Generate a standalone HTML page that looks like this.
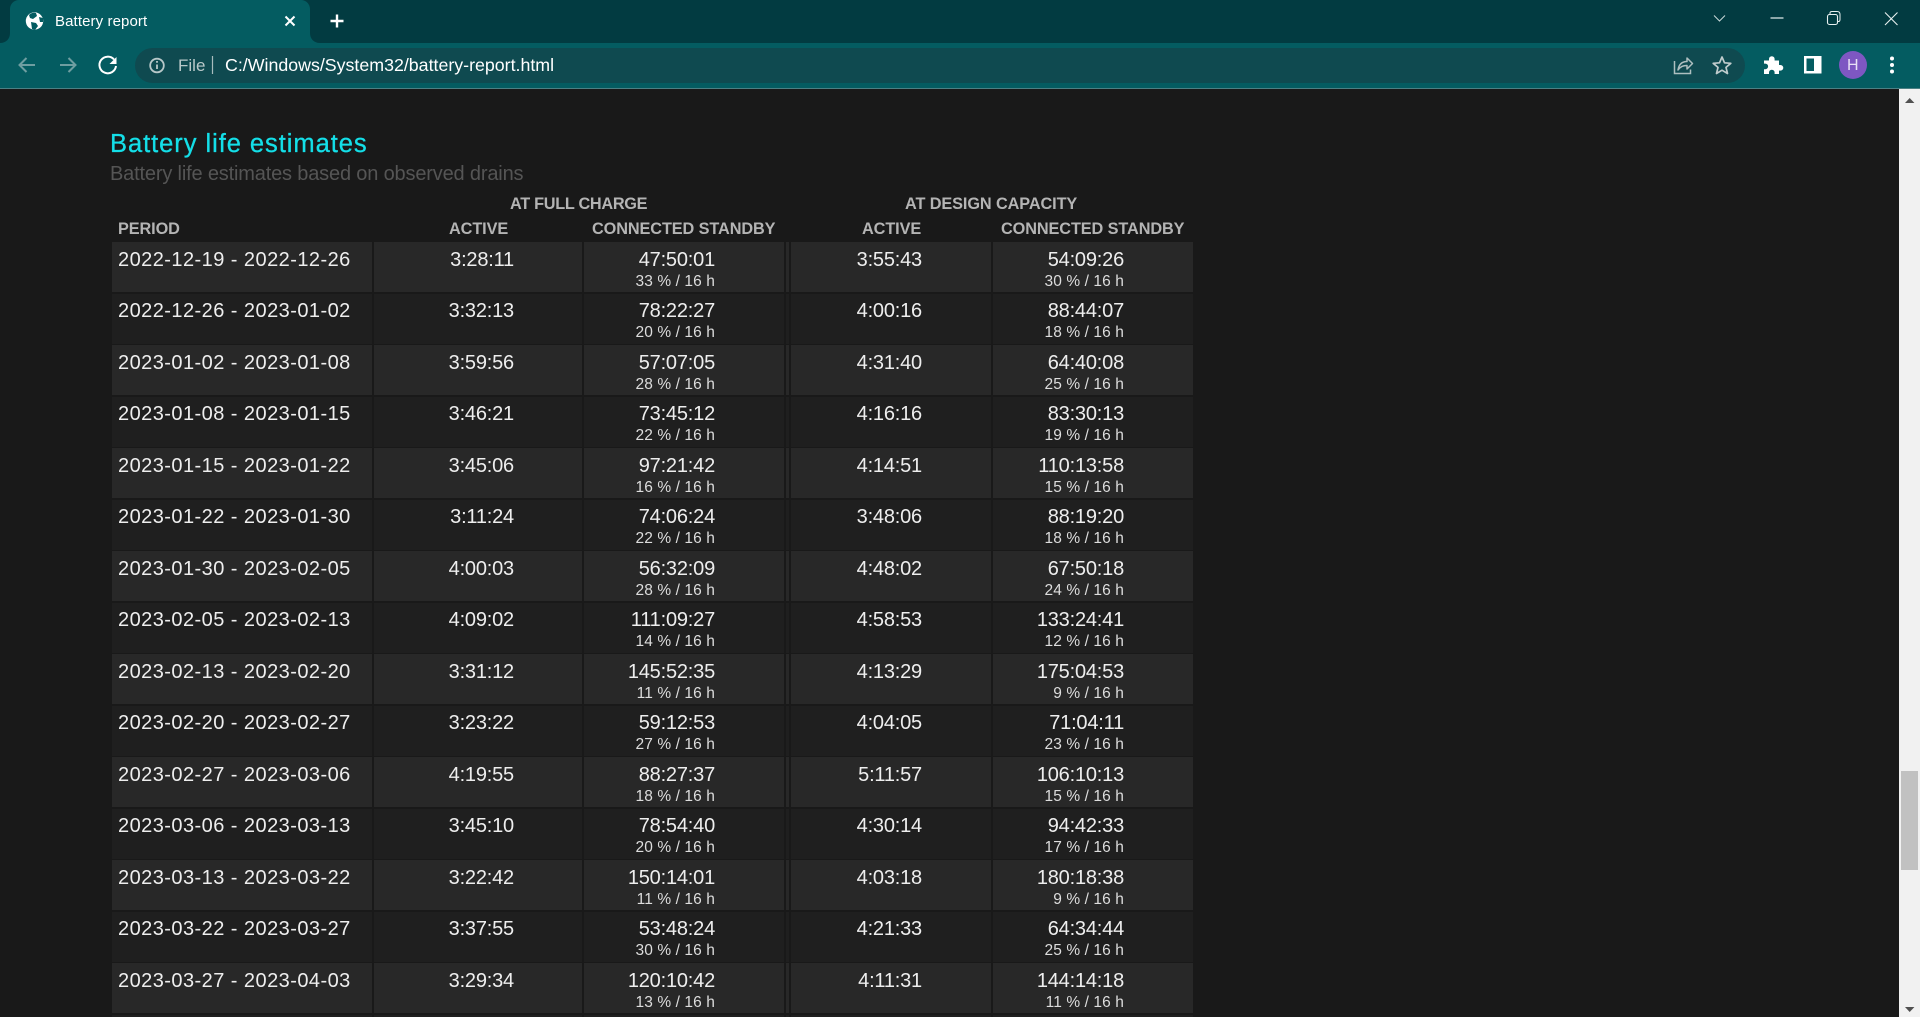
<!DOCTYPE html>
<html><head><meta charset="utf-8"><title>Battery report</title>
<style>
html,body{margin:0;padding:0;width:1920px;height:1017px;overflow:hidden;background:#191919;font-family:"Liberation Sans",sans-serif;}
#top{position:absolute;left:0;top:0;width:1920px;height:43px;background:#023b41;}
#bar{position:absolute;left:0;top:43px;width:1920px;height:45px;background:#045c61;}
#line{position:absolute;left:0;top:88px;width:1920px;height:1px;background:#4b8084;}
#omni{position:absolute;left:135px;top:48px;width:1610px;height:35px;border-radius:18px;background:#0f4a50;}
.t{position:absolute;white-space:nowrap;}
svg{position:absolute;left:0;top:0;}
.row{position:absolute;left:0;width:1200px;height:50px;}
.c{position:absolute;top:0;height:50px;}
.l .c{background:#282828;}
.d .c{background:#1f1f1f;}
.c1{left:112px;width:260px;}.c2{left:374px;width:208px;}.c3{left:584px;width:200px;}.c4{left:786px;width:3px;}.c5{left:791px;width:200px;}.c6{left:993px;width:200px;}
.txt{position:absolute;color:#eee;white-space:nowrap;font-size:20px;line-height:24px;top:6px;letter-spacing:-.2px;}
.d .txt{top:5.500px;}
.txt.p{left:118px;letter-spacing:.45px;}
.r2{right:686px;}.r3{right:485px;}.r5{right:278px;}.r6{right:76px;}
.s{position:absolute;color:#ddd;white-space:nowrap;font-size:15.5px;line-height:18px;top:31px;letter-spacing:.1px;}
.d .s{top:30px;}
.rows{position:absolute;left:0;top:0;width:1200px;height:1017px;overflow:hidden;}
.h{position:absolute;color:#b4b4b4;font-weight:bold;font-size:16.3px;line-height:20px;white-space:nowrap;letter-spacing:-.1px;}
#sb{position:absolute;left:1899px;top:89px;width:21px;height:928px;background:#f1f1f1;}
#th{position:absolute;left:1901px;top:771px;width:17px;height:99px;background:#c1c1c1;}
</style></head><body>
<div id="top"></div><div id="bar"></div><div id="line"></div><div id="omni"></div>
<svg width="1920" height="89" viewBox="0 0 1920 89" fill="none">
<path d="M0 43C6 43 10 39 10 33V9C10 4 14 0 19 0H301C306 0 310 4 310 9V33C310 39 314 43 320 43Z" fill="#045c61"/>
<circle cx="34.5" cy="21" r="8.7" fill="#fff"/>
<path d="M29 15c2-2 5-3 7-2l1 3-4 3-3-1zM31 22l5 1 2 3-3 4-3-1zM39 17l4 1 0 4-3 0z" fill="#045c61"/>
<path d="M285.5 16.5l9 9M294.500 16.500l-9 9" stroke="#fff" stroke-width="2"/>
<path d="M337 14.500v13M330.500 21h13" stroke="#fff" stroke-width="2.400"/>
<path d="M1714 15.500l5.500 5.500 5.500-5.500" stroke="#c9d8d9" stroke-width="1"/>
<path d="M1770.500 18h13" stroke="#e8f0f0" stroke-width="1.200"/>
<rect x="1827.500" y="14.500" width="10" height="10" rx="2" stroke="#e8f0f0" stroke-width="1.100"/>
<path d="M1830 14v-1c0-1 1-1.500 2-1.500h5c2 0 3 1 3 3v5c0 1-.5 2-1.500 2h-1" stroke="#e8f0f0" stroke-width="1"/>
<path d="M1885 12.500l12.500 12.500M1897.500 12.500l-12.500 12.500" stroke="#e8f0f0" stroke-width="1.100"/>
<path d="M35 65H20M26.500 58l-7 7 7 7" stroke="#6f9ea1" stroke-width="2"/>
<path d="M60 65h15M68.500 58l7 7-7 7" stroke="#6f9ea1" stroke-width="2"/>
<path d="M114 59.500a8.300 8.300 0 1 0 2 6.500" stroke="#fff" stroke-width="2"/>
<path d="M116.500 57v7h-7z" fill="#fff"/>
<circle cx="157" cy="65.500" r="6.800" stroke="#b8c8c9" stroke-width="1.800"/>
<path d="M157 64.500v4.500M157 61v1.800" stroke="#b8c8c9" stroke-width="1.800"/>
<path d="M212.500 56v18" stroke="#a8bcbe" stroke-width="1.200"/>
<path d="M1674.500 61v12.500h16v-4" stroke="#aebfc0" stroke-width="1.500"/>
<path d="M1678 70c1-6 4-8.500 9-8.500v-3.500l5.500 5.500-5.500 5.500v-3.500c-4 0-6.500 1-9 4.500z" stroke="#aebfc0" stroke-width="1.500" stroke-linejoin="round"/>
<path d="M1722 57l2.500 5.800 6.300.5-4.800 4.100 1.500 6.100-5.500-3.300-5.500 3.300 1.500-6.100-4.800-4.100 6.300-.5z" stroke="#c0cccd" stroke-width="1.700" stroke-linejoin="round"/>
<path d="M1764 60.500h5v-1.500a2.800 2.800 0 0 1 5.600 0v1.500h4.400v4.500h1.500a2.800 2.800 0 0 1 0 5.600h-1.500v3.400h-4.400v-1.500a2.800 2.800 0 0 0-5.600 0v1.500h-5v-4.800h1.300a2.800 2.800 0 0 0 0-5.600h-1.300z" fill="#fff"/>
<rect x="1804" y="56" width="17.500" height="17.500" fill="#fff"/><rect x="1806.500" y="58.500" width="7.500" height="12.500" fill="#045c61"/>
<circle cx="1853" cy="65" r="14" fill="#7e57c2"/>
<circle cx="1892" cy="58.500" r="2" fill="#fff"/><circle cx="1892" cy="65" r="2" fill="#fff"/><circle cx="1892" cy="71.500" r="2" fill="#fff"/>
</svg>
<div class="t" style="left:55px;top:13px;font-size:15px;line-height:18px;color:#fff;letter-spacing:.1px;">Battery report</div>
<div class="t" style="left:178px;top:55px;font-size:17px;line-height:21px;color:#b8c8c9;">File</div>
<div class="t" style="left:225px;top:55px;font-size:17.800px;line-height:21px;color:#fff;">C:/Windows/System32/battery-report.html</div>
<div class="t" style="left:1847px;top:58px;font-size:16px;line-height:16px;color:#e8e0f5;">H</div>

<div class="t" style="left:110px;top:129px;font-size:25.500px;line-height:30px;color:#14dfe8;letter-spacing:.95px;-webkit-text-stroke:.3px #14dfe8;">Battery life estimates</div>
<div class="t" style="left:110px;top:162px;font-size:20px;line-height:24px;color:#555;letter-spacing:-.17px;">Battery life estimates based on observed drains</div>
<div class="h" style="left:510px;top:194px;letter-spacing:-.3px;">AT FULL CHARGE</div>
<div class="h" style="left:905px;top:194px;">AT DESIGN CAPACITY</div>
<div class="h" style="left:118px;top:219px;">PERIOD</div>
<div class="h" style="left:449px;top:219px;">ACTIVE</div>
<div class="h" style="left:592px;top:219px;">CONNECTED STANDBY</div>
<div class="h" style="left:862px;top:219px;">ACTIVE</div>
<div class="h" style="left:1001px;top:219px;">CONNECTED STANDBY</div>

<div class="rows">
<div class="row l" style="top:242px"><div class="c c1"></div><div class="c c2"></div><div class="c c3"></div><div class="c c4"></div><div class="c c5"></div><div class="c c6"></div><div class="txt p">2022-12-19 - 2022-12-26</div><div class="txt r2">3:28:11</div><div class="txt r3">47:50:01</div><div class="s r3">33 % / 16 h</div><div class="txt r5">3:55:43</div><div class="txt r6">54:09:26</div><div class="s r6">30 % / 16 h</div></div>
<div class="row d" style="top:293.500px"><div class="c c1"></div><div class="c c2"></div><div class="c c3"></div><div class="c c4"></div><div class="c c5"></div><div class="c c6"></div><div class="txt p">2022-12-26 - 2023-01-02</div><div class="txt r2">3:32:13</div><div class="txt r3">78:22:27</div><div class="s r3">20 % / 16 h</div><div class="txt r5">4:00:16</div><div class="txt r6">88:44:07</div><div class="s r6">18 % / 16 h</div></div>
<div class="row l" style="top:345px"><div class="c c1"></div><div class="c c2"></div><div class="c c3"></div><div class="c c4"></div><div class="c c5"></div><div class="c c6"></div><div class="txt p">2023-01-02 - 2023-01-08</div><div class="txt r2">3:59:56</div><div class="txt r3">57:07:05</div><div class="s r3">28 % / 16 h</div><div class="txt r5">4:31:40</div><div class="txt r6">64:40:08</div><div class="s r6">25 % / 16 h</div></div>
<div class="row d" style="top:396.500px"><div class="c c1"></div><div class="c c2"></div><div class="c c3"></div><div class="c c4"></div><div class="c c5"></div><div class="c c6"></div><div class="txt p">2023-01-08 - 2023-01-15</div><div class="txt r2">3:46:21</div><div class="txt r3">73:45:12</div><div class="s r3">22 % / 16 h</div><div class="txt r5">4:16:16</div><div class="txt r6">83:30:13</div><div class="s r6">19 % / 16 h</div></div>
<div class="row l" style="top:448px"><div class="c c1"></div><div class="c c2"></div><div class="c c3"></div><div class="c c4"></div><div class="c c5"></div><div class="c c6"></div><div class="txt p">2023-01-15 - 2023-01-22</div><div class="txt r2">3:45:06</div><div class="txt r3">97:21:42</div><div class="s r3">16 % / 16 h</div><div class="txt r5">4:14:51</div><div class="txt r6">110:13:58</div><div class="s r6">15 % / 16 h</div></div>
<div class="row d" style="top:499.500px"><div class="c c1"></div><div class="c c2"></div><div class="c c3"></div><div class="c c4"></div><div class="c c5"></div><div class="c c6"></div><div class="txt p">2023-01-22 - 2023-01-30</div><div class="txt r2">3:11:24</div><div class="txt r3">74:06:24</div><div class="s r3">22 % / 16 h</div><div class="txt r5">3:48:06</div><div class="txt r6">88:19:20</div><div class="s r6">18 % / 16 h</div></div>
<div class="row l" style="top:551px"><div class="c c1"></div><div class="c c2"></div><div class="c c3"></div><div class="c c4"></div><div class="c c5"></div><div class="c c6"></div><div class="txt p">2023-01-30 - 2023-02-05</div><div class="txt r2">4:00:03</div><div class="txt r3">56:32:09</div><div class="s r3">28 % / 16 h</div><div class="txt r5">4:48:02</div><div class="txt r6">67:50:18</div><div class="s r6">24 % / 16 h</div></div>
<div class="row d" style="top:602.500px"><div class="c c1"></div><div class="c c2"></div><div class="c c3"></div><div class="c c4"></div><div class="c c5"></div><div class="c c6"></div><div class="txt p">2023-02-05 - 2023-02-13</div><div class="txt r2">4:09:02</div><div class="txt r3">111:09:27</div><div class="s r3">14 % / 16 h</div><div class="txt r5">4:58:53</div><div class="txt r6">133:24:41</div><div class="s r6">12 % / 16 h</div></div>
<div class="row l" style="top:654px"><div class="c c1"></div><div class="c c2"></div><div class="c c3"></div><div class="c c4"></div><div class="c c5"></div><div class="c c6"></div><div class="txt p">2023-02-13 - 2023-02-20</div><div class="txt r2">3:31:12</div><div class="txt r3">145:52:35</div><div class="s r3">11 % / 16 h</div><div class="txt r5">4:13:29</div><div class="txt r6">175:04:53</div><div class="s r6">9 % / 16 h</div></div>
<div class="row d" style="top:705.500px"><div class="c c1"></div><div class="c c2"></div><div class="c c3"></div><div class="c c4"></div><div class="c c5"></div><div class="c c6"></div><div class="txt p">2023-02-20 - 2023-02-27</div><div class="txt r2">3:23:22</div><div class="txt r3">59:12:53</div><div class="s r3">27 % / 16 h</div><div class="txt r5">4:04:05</div><div class="txt r6">71:04:11</div><div class="s r6">23 % / 16 h</div></div>
<div class="row l" style="top:757px"><div class="c c1"></div><div class="c c2"></div><div class="c c3"></div><div class="c c4"></div><div class="c c5"></div><div class="c c6"></div><div class="txt p">2023-02-27 - 2023-03-06</div><div class="txt r2">4:19:55</div><div class="txt r3">88:27:37</div><div class="s r3">18 % / 16 h</div><div class="txt r5">5:11:57</div><div class="txt r6">106:10:13</div><div class="s r6">15 % / 16 h</div></div>
<div class="row d" style="top:808.500px"><div class="c c1"></div><div class="c c2"></div><div class="c c3"></div><div class="c c4"></div><div class="c c5"></div><div class="c c6"></div><div class="txt p">2023-03-06 - 2023-03-13</div><div class="txt r2">3:45:10</div><div class="txt r3">78:54:40</div><div class="s r3">20 % / 16 h</div><div class="txt r5">4:30:14</div><div class="txt r6">94:42:33</div><div class="s r6">17 % / 16 h</div></div>
<div class="row l" style="top:860px"><div class="c c1"></div><div class="c c2"></div><div class="c c3"></div><div class="c c4"></div><div class="c c5"></div><div class="c c6"></div><div class="txt p">2023-03-13 - 2023-03-22</div><div class="txt r2">3:22:42</div><div class="txt r3">150:14:01</div><div class="s r3">11 % / 16 h</div><div class="txt r5">4:03:18</div><div class="txt r6">180:18:38</div><div class="s r6">9 % / 16 h</div></div>
<div class="row d" style="top:911.500px"><div class="c c1"></div><div class="c c2"></div><div class="c c3"></div><div class="c c4"></div><div class="c c5"></div><div class="c c6"></div><div class="txt p">2023-03-22 - 2023-03-27</div><div class="txt r2">3:37:55</div><div class="txt r3">53:48:24</div><div class="s r3">30 % / 16 h</div><div class="txt r5">4:21:33</div><div class="txt r6">64:34:44</div><div class="s r6">25 % / 16 h</div></div>
<div class="row l" style="top:963px"><div class="c c1"></div><div class="c c2"></div><div class="c c3"></div><div class="c c4"></div><div class="c c5"></div><div class="c c6"></div><div class="txt p">2023-03-27 - 2023-04-03</div><div class="txt r2">3:29:34</div><div class="txt r3">120:10:42</div><div class="s r3">13 % / 16 h</div><div class="txt r5">4:11:31</div><div class="txt r6">144:14:18</div><div class="s r6">11 % / 16 h</div></div>
<div class="row d" style="top:1014.500px"><div class="c c1"></div><div class="c c2"></div><div class="c c3"></div><div class="c c4"></div><div class="c c5"></div><div class="c c6"></div></div>
</div>

<div id="sb"></div><div id="th"></div>
<svg width="1920" height="1017" viewBox="0 0 1920 1017" style="pointer-events:none"><path d="M1905 103l4.700-5 4.700 5z" fill="#505050"/><path d="M1905 1007l4.700 5 4.700-5z" fill="#505050"/></svg>
</body></html>
